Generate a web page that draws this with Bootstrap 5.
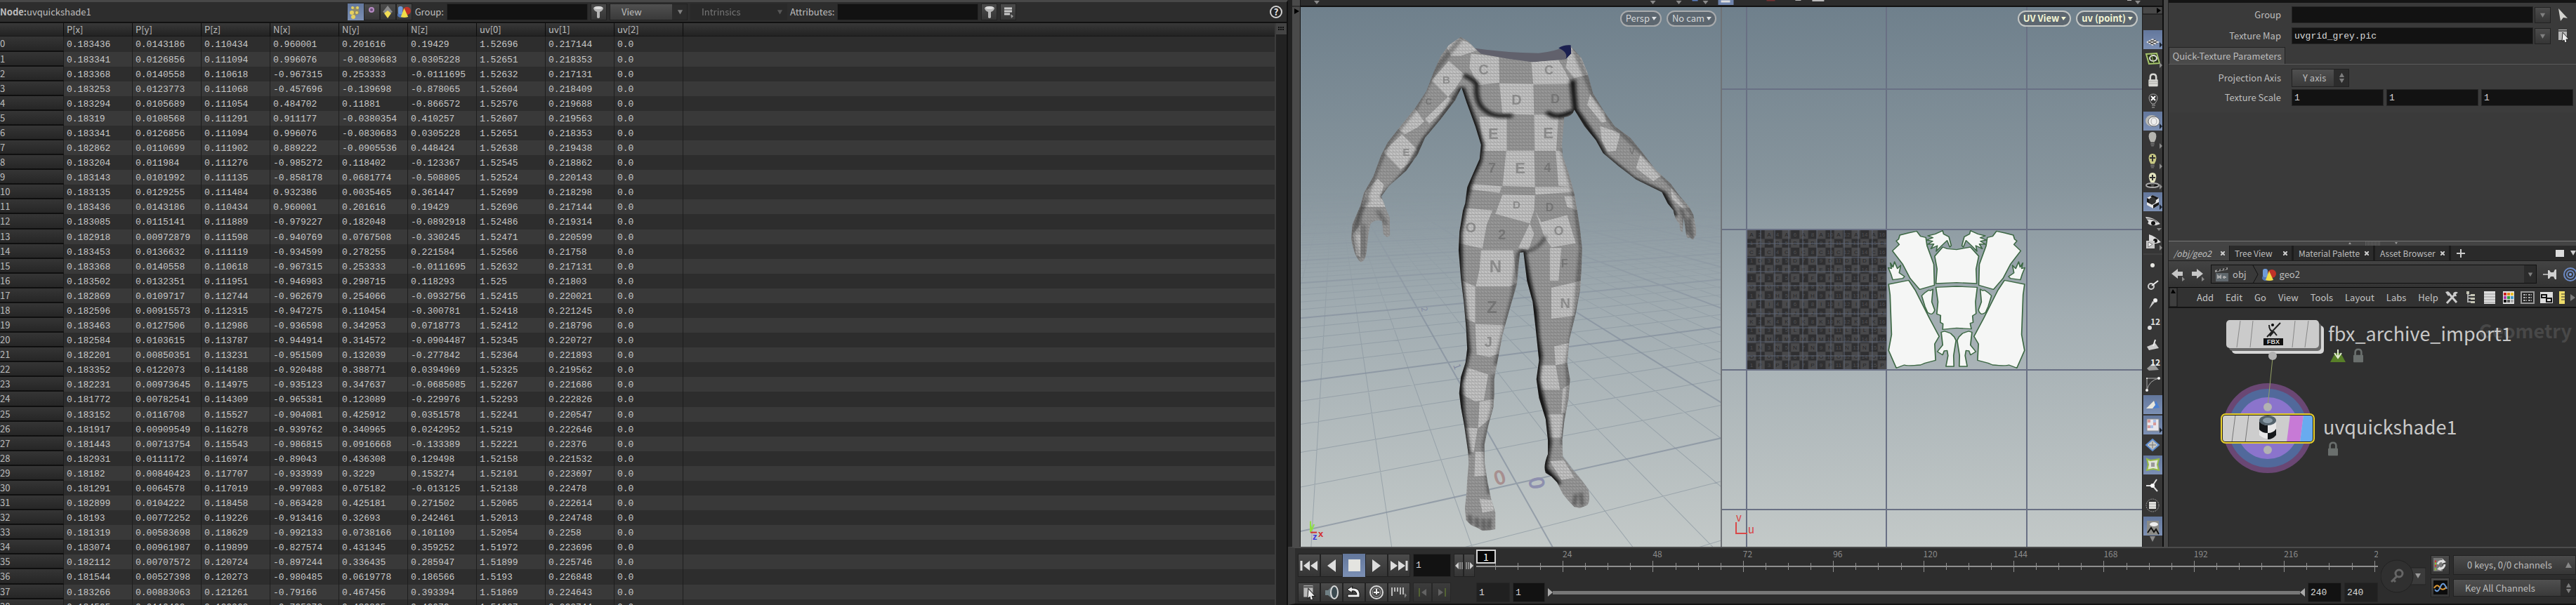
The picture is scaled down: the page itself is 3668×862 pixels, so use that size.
<!DOCTYPE html>
<html lang="en">
<head>
<meta charset="utf-8">
<meta name="viewport" content="width=device-width, initial-scale=1">
<title>uvquickshade1</title>
<link href="https://cdn.jsdelivr.net/npm/bootstrap@5.3.0/dist/css/bootstrap.min.css" rel="stylesheet">
<style>
:root{--ui:"Noto Sans CJK SC","Noto Sans",sans-serif;--code:"Liberation Mono",monospace}
body{background:#2d2d2d;color:#bdbdbd;font-family:var(--ui);font-size:13px;line-height:20px}
button,input,select{font-family:inherit;font-size:13px;color:inherit;border:0;border-radius:0;padding:0}
button{background:none;display:inline-flex;align-items:center;justify-content:center;white-space:nowrap}
svg{display:block;flex:none}
.field{background:#121212;border:1px solid #262626;color:#d8d8d8;font-family:var(--code);line-height:18px;height:24px;min-width:0;padding:0 3px}
.keycap{background:linear-gradient(#4b4b4b,#353535);border:1px solid #222}
.lit{background:linear-gradient(#63779c,#7c90b4)}
.picker{appearance:none;background:linear-gradient(90deg,transparent calc(100% - 21px),#2c2c2c calc(100% - 21px)),linear-gradient(#505050,#3a3a3a);border:1px solid #222}
.arrowed{position:relative}
.arrowed>svg{position:absolute;right:6px;top:50%;translate:0 -50%;pointer-events:none}

/* spreadsheet */
.sheet-pane{flex:0 0 50%;border-top:3px solid #484848;border-right:2px solid #111}
.sheet-bar{height:30px;border-bottom:2px solid #111}
.sheet-bar .keycap,.sheet-bar .lit{width:23px;height:24px}
.sheet-bar .field{width:201px}
.grid-data{width:100%;table-layout:fixed;border-collapse:separate;border-spacing:0}
.grid-data th,.grid-data td{padding:0 0 0 4px;border-right:1px solid #1e1e1e;white-space:nowrap;overflow:hidden}
.grid-data thead th{height:19px;line-height:18px;font-weight:400;background:linear-gradient(#383838,#222);border-right:1px solid #0c0c0c;border-bottom:1px solid #181818}
.grid-data tbody tr{height:21px;background:#2d2d2d}
.grid-data tbody tr:nth-child(even){background:#393939}
.grid-data tbody tr:nth-child(12n+1){height:22px}
.grid-data td{font-family:var(--code);line-height:18px;color:#c8c8c8}
.grid-data tbody td{padding-top:3px}
.grid-data td:last-child,.grid-data thead th:last-child{border-right:0}
.grid-data tbody th{font-weight:400;line-height:19px;padding-left:0;background:linear-gradient(#353535,#262626);border-bottom:2px solid #0f0f0f}
.scroller{width:17px;background:#222;border-left:2px solid #3c3c3c}

/* viewport */
.edge-strip{width:18px;background:#222;border-right:2px solid #161616}
.edge-strip div{width:11px;margin-left:6px;background:#4a4a4a;height:100%}
.scene{flex:1 1 0;background:linear-gradient(#6f808c,#87959d 33%,#a2adb2 57%,#c3c9c8);position:relative;min-width:0;overflow:hidden}
.scene+.scene{border-left:2px solid #6f7276}
.scene>svg{position:absolute;inset:0;width:100%;height:100%}
.pills{position:absolute;top:5px;right:6px;gap:7px}
.pill{height:23px;border:2px solid #a9abad;border-radius:12px;background:#5d6770;color:#d5d8da;padding:0 5px 1px 6px;gap:3px}
.pill.strong{border-color:#c3c6c4;font-weight:700;color:#f4f6d4}
.rail{width:29px;background:#363636;border-left:1px solid #222}
.rail button{width:27px;height:27px;margin-left:1px}
.rail-split{width:9px;background:#484848;border-left:2px solid #0e0e0e;border-right:1px solid #222}

/* right column */
.side{flex:0 0 580px;min-width:0}
.params{height:343px;background:#3a3a3a;border-top:4px solid #141414}
.params label{width:160px;text-align:right;margin-right:15px;flex:none}
.group-tab{background:#4a4a4a;border:1px solid #232323;border-bottom:0;width:166px;height:24px}
.h-split{height:7px;background:#444;border-top:1px solid #777}
.tabs-row{height:22px;background:#2a2a2a;border-bottom:1px solid #1d1d1d}
.doc-tab{height:21px;background:#2b2b2b;border-right:3px solid #1c1c1c;padding:0 6px 0 7px;line-height:20px;font-size:12px;justify-content:space-between}
.doc-tab.on{background:#434343;font-style:italic;border-right-width:1px}
.path-row{height:38px;background:linear-gradient(#434343,#333);border-bottom:1px solid #0c0c0c}
.path-box{height:27px;border:1px solid #111;background:#393939;flex:1 1 0}
.menu-row{height:29px;background:#323232;border-bottom:2px solid #141414}
.menu-row a{color:#c2c2c2;text-decoration:none}
.net{flex:1 1 0;min-height:0;background:#303030}
.net svg{width:100%;height:100%}

/* play bar */
.playbar{height:83px;border-top:2px solid #4b4b4b;background:#2d2d2d;border-bottom:2px solid #121212;border-left:10px solid #3a3a3a}
.transport .keycap,.transport .lit{width:32px;height:33px}
.transport.low .keycap{height:28px}
.ruler{position:relative;height:46px;overflow:hidden}
.ruler .base{position:absolute;left:0;right:0;top:25px;height:2px;background:#8f8f8f}
.tick{position:absolute;width:1px;height:10px;top:21px;background:#8f8f8f}
.tick.major{height:16px;top:18px}
.tick span{position:absolute;left:0;top:-17px;font-size:12px;line-height:14px;color:#8a8a8a}
.head{position:absolute;left:0;top:2px;width:28px;height:20px;border:2px solid #d5d5d5;background:#080808;color:#fff;text-align:center;line-height:16px;font-size:14px}
.track{height:5px;background:#777}
</style>
</head>
<body class="vh-100 d-flex overflow-hidden m-0">

<svg width="0" height="0" class="position-absolute" aria-hidden="true">
<defs>
<symbol id="down" viewBox="0 0 10 10"><path d="M1 2H9L5 9Z" fill="#808080"/></symbol>
<symbol id="updown" viewBox="0 0 10 18"><path d="M1 8H9L5 1ZM1 10H9L5 17Z" fill="#7d7d7d"/></symbol>
<symbol id="funnel" viewBox="0 0 20 20"><path d="M3 4Q10 0 17 4Q17 8 12 10V18Q10 20 8 18V10Q3 8 3 4Z" fill="#b5b5b5"/><ellipse cx="10" cy="4" rx="6" ry="2" fill="#dcdcdc"/></symbol>
<symbol id="prims" viewBox="0 0 20 20"><ellipse cx="5" cy="15" rx="5" ry="4" fill="#5377b5"/><rect x="1" y="2" width="7" height="12" rx="3" fill="#6f9bd8"/><circle cx="14" cy="9" r="6" fill="#c03228"/><path d="M10 5L16 18Q10 20 5 18Z" fill="#f0dd49"/></symbol>
<symbol id="padlock" viewBox="0 0 20 24"><path d="M5 12V7Q5 2 10 2T15 7V12" fill="none" stroke="currentColor" stroke-width="3"/><rect x="2" y="11" width="16" height="12" rx="1" fill="currentColor"/></symbol>
<symbol id="bulb" viewBox="0 0 20 24"><path d="M10 1Q16 1 16 8Q16 12 13 17H7Q4 12 4 8Q4 1 10 1Z" fill="currentColor"/><path d="M7 19H13M7 21H13M8 23H12" stroke="#8a8a8a"/></symbol>
<symbol id="pageptr" viewBox="0 0 20 20"><path d="M3 1H15V16H3Z" fill="#b8b8b8"/><path d="M3 3H15" stroke="#555" stroke-width="2"/><path d="M9 5L18 15L14 15L15 19L12 20L11 16L8 18Z" fill="#ececec" stroke="#222"/></symbol>
</defs>
</svg>

<section class="sheet-pane d-flex flex-column overflow-hidden">
  <div class="sheet-bar d-flex align-items-center">
    <div class="flex-grow-1 d-flex" style="flex-basis:0"><b class="fw-semibold">Node:</b><span>uvquickshade1</span></div>
    <div class="d-flex align-items-center" style="flex:0 0 73%">
      <button class="lit" aria-label="Points"><svg width="20" height="20" viewBox="0 0 20 20"><path d="M5 4L14 2L16 12L8 17Z" fill="#8f8a6a"/><g fill="#e6d05e"><circle cx="6" cy="4" r="2"/><circle cx="13" cy="4" r="2"/><circle cx="5" cy="11" r="3"/><circle cx="12" cy="11" r="2"/><circle cx="7" cy="17" r="3"/></g></svg></button>
      <button class="keycap" aria-label="Vertices"><svg width="18" height="20" viewBox="0 0 18 20"><circle cx="9" cy="7" r="3" fill="#6b4c7a" stroke="#b78cc4" stroke-width="2"/></svg></button>
      <button class="keycap" aria-label="Primitives"><svg width="20" height="20" viewBox="0 0 20 20"><path d="M10 1L17 10L10 14L3 10Z" fill="#8c8c8c"/><path d="M10 8L15 12L10 19L5 12Z" fill="#f1dd55"/></svg></button>
      <button class="keycap" aria-label="Detail"><svg width="19" height="19"><use href="#prims"/></svg></button>
      <label for="grp" class="mx-1">Group:</label><input id="grp" class="field me-1">
      <button class="keycap me-1" aria-label="Filter group"><svg width="20" height="20"><use href="#funnel"/></svg></button>
      <div class="arrowed me-1"><select class="picker ps-3" aria-label="View" style="width:111px;height:24px"><option>View</option></select><svg width="9" height="9"><use href="#down"/></svg></div>
      <div class="arrowed opacity-50"><select class="ps-3 picker border-0" aria-label="Intrinsics" disabled style="width:138px;height:24px;background:#272727;opacity:1"><option>Intrinsics</option></select><svg width="9" height="9"><use href="#down"/></svg></div>
      <label for="att" class="mx-1">Attributes:</label><input id="att" class="field me-1">
      <button class="keycap me-1" aria-label="Filter attributes"><svg width="20" height="20"><use href="#funnel"/></svg></button>
      <button class="keycap" aria-label="Columns"><svg width="18" height="20" viewBox="0 0 18 20"><path d="M3 5H14M3 9H14M3 13H11" stroke="#c9c9c9" stroke-width="3"/><path d="M12 13L16 16L13 19Z" fill="#999"/></svg></button>
      <button class="ms-auto me-1 bg-transparent" aria-label="Help"><svg width="22" height="20" viewBox="0 0 22 20"><circle cx="11" cy="10" r="8" fill="#242424" stroke="#d2d2d2" stroke-width="2"/><text x="11" y="15" text-anchor="middle" font-size="13" font-weight="700" fill="#e6e6e6">?</text></svg></button>
    </div>
  </div>
  <div class="d-flex flex-grow-1 overflow-hidden">
    <div class="flex-grow-1 overflow-hidden">
      <table class="grid-data">
        <colgroup><col style="width:91px"><col span="9" style="width:98px"><col></colgroup>
        <thead><tr><th></th><th>P[x]</th><th>P[y]</th><th>P[z]</th><th>N[x]</th><th>N[y]</th><th>N[z]</th><th>uv[0]</th><th>uv[1]</th><th>uv[2]</th><th></th></tr></thead>
        <tbody id="rows"></tbody>
      </table>
    </div>
    <div class="scroller"><svg width="15" height="16" viewBox="0 0 15 16"><rect width="15" height="16" fill="#444"/><path d="M3 6H12M3 9H12" stroke="#111" stroke-width="2" stroke-dasharray="2 1"/></svg></div>
  </div>
</section>

<main class="flex-grow-1 d-flex flex-column" style="min-width:0">
  <div class="d-flex flex-grow-1" style="min-height:0">
    <div class="edge-strip"><div><svg width="11" height="22" viewBox="0 0 11 22"><path d="M0 9H11" stroke="#161616"/><path d="M3 12L10 16L3 20Z" fill="#000"/></svg></div></div>
    <div class="d-flex flex-column flex-grow-1" style="min-width:0">
      <svg class="w-100" height="10" viewBox="0 0 1228 10" preserveAspectRatio="none"><rect width="1228" height="10" fill="#2c2c2c"/><path d="M0 9H1228" stroke="#111" stroke-width="2"/><path d="M19 1H27L23 6ZM498 1H506L502 6ZM535 1H543L539 6ZM573 1H581L577 6ZM1189 1H1197L1193 6Z" fill="#8a8a8a"/><rect x="595" width="22" height="7" fill="#7085ad"/><path d="M599 2H612" stroke="#ddd" stroke-width="3"/><path d="M558 0H566" stroke="#5b7fc0" stroke-width="3"/><path d="M664 0H676" stroke="#733" stroke-width="3"/><path d="M705 0H713M729 1H746M1178 0H1184" stroke="#bbb" stroke-width="2"/></svg>
      <div class="d-flex flex-grow-1" style="min-height:0">
        <div class="scene">
          <svg viewBox="1853 10 597 769" preserveAspectRatio="xMidYMid slice">
            <defs>
              <linearGradient id="fade" gradientUnits="userSpaceOnUse" x1="0" y1="275" x2="0" y2="460"><stop offset="0" stop-color="#000"/><stop offset=".4" stop-color="#555"/><stop offset="1" stop-color="#eee"/></linearGradient>
              <mask id="far" maskUnits="userSpaceOnUse" x="1840" y="270" width="640" height="520"><rect x="1840" y="270" width="640" height="520" fill="url(#fade)"/></mask>
              <pattern id="mesh" width="11" height="14" patternUnits="userSpaceOnUse"><path d="M0 0L11 14M0 0V14M0 7H11" stroke="#2c2c2c" stroke-width="1" opacity=".42" fill="none"/></pattern>
              <filter id="soft" x="-20%" y="-20%" width="140%" height="140%"><feGaussianBlur stdDeviation="6"/></filter>
              <clipPath id="skin"><path id="figure" d="M589 160L615 178L640 210L660 232L750 252L840 267L955 255L975 230L973 200L1010 250L1030 310L1050 400L1090 480L1125 540L1180 590L1220 650L1270 730L1320 785L1350 835L1385 885L1400 920L1408 970Q1412 1010 1404 1012L1400 1024L1392 1022L1388 1014Q1378 1026 1374 1000L1366 930L1362 992Q1352 994 1352 960L1346 950Q1336 940 1330 900L1310 870L1290 822L1200 768L1140 712L1085 655L1060 600L1020 540L985 470Q978 500 950 502L942 620L945 670L965 740L985 830L995 900L1005 980L1012 1060L1010 1150L1005 1240L990 1340L968 1450L960 1550L970 1620L965 1700L950 1800L943 1880L945 1950L975 2000L1010 2050L1034 2090Q1042 2140 1030 2158L1005 2170L985 2165L965 2140L945 2110L925 2060L905 2035L885 2020Q876 1990 893 1940L893 1880L885 1790L862 1700L853 1620L862 1540L850 1400L840 1290L820 1200L808 1078L795 1080L790 1150L785 1215L760 1320L735 1430L718 1540L706 1620L706 1690L703 1740L685 1820L672 1900L673 1980L683 2060L695 2130L710 2190L710 2260L690 2265L665 2267L650 2256L625 2242L608 2222L604 2170L610 2100L612 2050L617 1980L615 1930L602 1820L590 1740L584 1680L590 1610L606 1550L612 1490L608 1400L600 1290L590 1190L582 1070L585 990L597 900L605 870L612 800L630 750L655 680L660 620L640 540L610 440L592 375L570 430L520 510L465 590L440 660L400 730L340 795L313 840L328 890L342 930L343 1005Q334 1024 320 1000L315 945Q290 936 275 958L268 1000L262 1070Q258 1120 240 1120Q218 1095 208 1020L212 960L240 880L252 825L285 755L312 665L335 610L380 540L430 465L470 390L495 310L520 240L548 195Z"/></clipPath>
            </defs>
            <g id="floor" mask="url(#far)" fill="none"></g>
            <text x="2180" y="703" font-size="30" font-weight="700" fill="#8d8fae" text-anchor="middle" transform="rotate(80 2187 695)">0</text>
            <text x="2136" y="690" font-size="28" font-weight="700" fill="#a78f8f" text-anchor="middle" transform="rotate(-18 2136 680)">0</text>
            <text x="2025" y="447" font-size="12" fill="#8289a0" transform="rotate(80 2030 442)">2</text>
            <text x="2071" y="528" font-size="14" fill="#8289a0" transform="rotate(70 2076 523)">1</text>
            <g transform="translate(1840 0) scale(.40816 .33333)">
              <path d="M638 208Q740 226 860 229Q920 222 970 193L975 230L955 256L840 268L750 254L660 234Z" fill="#61616c"/>
              <path d="M930 207Q950 192 973 195L974 230L955 255Q965 225 930 207Z" fill="#1b2050"/>
              <g clip-path="url(#skin)">
                <rect x="190" y="150" width="1240" height="2140" fill="#989898"/>
                <g fill="#c3c3c3">
                  <path d="M625 230L722 245L724 355L650 365L620 290ZM835 265L930 258L950 300L975 360L842 362ZM724 358L842 360L845 492L735 488ZM655 500L750 500L750 645L665 645ZM845 492L930 492L922 645L847 645ZM748 645L845 645L848 800L735 795ZM920 645L942 648L985 800L930 795ZM610 785L732 797L725 825L608 808ZM848 800L985 800L988 820L850 832ZM735 832L848 835L845 900L830 955L710 915ZM590 888L700 900L680 960L665 1062L580 1040ZM950 840L990 840L998 900L960 885ZM850 905L870 950L960 920L990 1040L905 1058L880 1010ZM830 955L845 1000L825 1070L790 1060Z"/>
                  <path d="M660 1070L772 1070L785 1210L760 1225L642 1225L655 1150ZM640 1385L748 1390L725 1510L690 1525L645 1515ZM610 1570L685 1600L670 1710L640 1715L586 1680ZM655 1715L710 1705L690 1790L650 1830ZM600 1825L648 1830L635 1930L612 1930ZM640 1930L678 1930L682 2030L637 2035ZM655 2130L698 2135L705 2180L665 2190ZM905 1230L1010 1200L985 1350L905 1362ZM900 1060L940 1060L930 1200L900 1200ZM915 1480L970 1465L960 1550L920 1560ZM865 1560L920 1560L935 1665L868 1665ZM945 1660L972 1640L960 1760L940 1765ZM885 1770L948 1770L940 1870L892 1870ZM900 1970L948 1965L985 2040L940 2050ZM595 1200L640 1225L640 1380L605 1360Z"/>
                  <path d="M575 160L625 190L650 215L590 240L555 240L540 200ZM548 262L602 320L570 380L545 415L488 345ZM430 465L462 520L440 545L395 575L370 550ZM545 415L565 430L480 530L465 510ZM385 575L438 640L430 680L380 725L320 650ZM300 765L322 790L310 840L330 885L245 885L258 820ZM240 960L215 1000L225 1090L240 1100ZM970 200L1010 250L1035 320L985 335L955 290ZM1040 405L1090 480L1095 522L1080 525L1030 450ZM1075 540L1145 570L1130 645L1100 650L1080 600ZM1215 660L1290 750L1260 775L1200 720ZM1320 800L1390 890L1360 890L1325 850Z"/>
                </g>
                <rect x="190" y="150" width="1240" height="2140" fill="url(#mesh)"/>
                <g fill="none" stroke="#111" filter="url(#soft)">
                  <path d="M592 375L610 440L640 540L660 620L652 690L625 760L605 850L583 1000L586 1180L605 1400L612 1500L586 1640L592 1760L612 1940" stroke-width="20"/>
                  <path d="M600 322Q632 340 645 360Q640 440 672 470Q700 505 770 495" stroke-width="15"/>
                  <path d="M890 480Q920 515 980 478M978 345L988 470L1060 600L1090 668L1190 768L1295 828L1335 925" stroke-width="18"/>
                  <path d="M804 1070L822 1200L846 1330L852 1440L862 1520L852 1620L885 1790L894 1890L880 2000L930 2070" stroke-width="22"/>
                  <path d="M592 375L520 512L465 592L400 732L315 845" stroke-width="10"/>
                  <path d="M804 1078Q860 1070 885 1010M790 1080L772 1260L712 1560" stroke-width="9" opacity=".6"/>
                  <path d="M590 165L495 310L430 465L335 610L285 755L210 1000M985 210L1050 400L1125 540L1220 650L1320 785L1405 930M985 340L985 470M945 640L985 830L1010 1060L990 1340L962 1550L968 1650L945 1900M706 1600L704 1740L672 1900L690 2110" stroke-width="12" opacity=".5"/>
                  <path d="M230 1000L240 900L270 850M300 900L330 960M215 1000L230 1110M250 960L250 1100" stroke-width="12" opacity=".35"/>
                  <path d="M620 2200L625 2240M645 2210L648 2255M668 2215L670 2265M690 2215L688 2262M990 2110L985 2160M1008 2105L1012 2160M1355 890L1365 920L1378 1000M1385 930L1395 1020" stroke-width="6" opacity=".8"/>
                </g>
              </g>
            </g>
            <g id="marks" fill="#555" opacity=".45" font-family="Liberation Sans, sans-serif" font-weight="700" text-anchor="middle"></g>
            <g fill="none" stroke-width="2"><path d="M1867 758V742" stroke="#90e040"/><path d="M1867 758H1876" stroke="#d03030"/></g>
            <g font-size="13" font-weight="700" font-family="Liberation Sans, sans-serif"><text x="1866" y="753" fill="#8ee03c">y</text><text x="1878" y="764" fill="#d22d2d">x</text><text x="1870" y="768" fill="#3a34dd">z</text></g>
          </svg>
          <div class="pills d-flex">
            <button class="pill">Persp<svg width="7" height="5"><path d="M0 0H7L3 5Z" fill="#dfe2e4"/></svg></button>
            <button class="pill">No cam<svg width="7" height="5"><path d="M0 0H7L3 5Z" fill="#dfe2e4"/></svg></button>
          </div>
        </div>
        <div class="scene">
          <svg viewBox="2452 10 598 769" preserveAspectRatio="xMidYMid slice">
            <defs>
              <pattern id="chk" x="2488" y="328" width="24.75" height="24.75" patternUnits="userSpaceOnUse"><rect width="24.75" height="24.75" fill="#2f2f31"/><path d="M0 0H12.4V12.4H0ZM12.4 12.4H24.75V24.75H12.4Z" fill="#49494b"/></pattern>
              <g id="half">
                <path d="M687 988L658 996L630 1005L626 1022L618 1030L628 1045L605 1072L640 1130L665 1190L697 1237L747 1219L745 1130L722 1050L718 1015L700 1010Z"/>
                <path d="M775 986L750 1000L725 1008L742 1016L721 1026L741 1031L724 1044L745 1043L735 1063L757 1050L753 1074L770 1052L790 1028L799 1056L804 1050L796 1012L778 1000Z"/>
                <path d="M612 1119L607 1142L598 1124L602 1148L591 1144L600 1172L606 1196L640 1190L646 1182L628 1166L633 1134L622 1148Z"/>
                <path d="M592 1215L660 1198L682 1240L730 1360L763 1438L748 1470L751 1540L715 1552L700 1560Q655 1565 645 1560L618 1573L592 1498L602 1430L597 1260Z"/>
                <path d="M742 1236L734 1242L728 1240L716 1250L704 1264L715 1310L724 1336Q742 1352 748 1325L738 1290Z"/>
                <path d="M770 1420L781 1416L792 1420L802 1425L814 1440L820 1455L812 1520L813 1566L786 1566L793 1520L790 1498L780 1500L775 1517L757 1503L775 1475Z"/>
              </g>
            </defs>
            <path d="M2487 0V790M2686 0V790M2886 0V790M2440 127H3060M2440 327H3060M2440 527H3060M2440 726H3060" stroke="#697084" stroke-width="2"/>
            <rect x="2488" y="328" width="198" height="198" fill="url(#chk)"/>
            <g id="cells" font-family="Liberation Sans, sans-serif" font-size="8" text-anchor="middle"></g>
            <path stroke="#5d6574" stroke-width="1" fill="none" d="M2507 328V526M2527 328V526M2547 328V526M2567 328V526M2587 328V526M2607 328V526M2626 328V526M2646 328V526M2666 328V526M2488 347H2686M2488 367H2686M2488 387H2686M2488 407H2686M2488 427H2686M2488 447H2686M2488 467H2686M2488 487H2686M2488 507H2686"/>
            <g transform="translate(2440 0) scale(.42092 .33333)" fill="#f5f6f5" stroke="#3d6844" stroke-width="4" stroke-linejoin="round">
              <use href="#half"/><use href="#half" transform="translate(1644 0) scale(-1 1)"/>
              <path d="M775 1056L790 1063L822 1067L869 1056L897 1095L888 1150L890 1212L822 1208L752 1212L756 1150L748 1095Z"/>
              <path d="M752 1228L822 1224L892 1228L886 1290L888 1340L876 1350L878 1378L868 1382L872 1406L822 1402L775 1408L776 1384L767 1378L768 1348L755 1342L759 1290Z"/>
            </g>
            <path d="M2472 744V760H2488" fill="none" stroke="#d94848" stroke-width="2"/>
            <g font-size="15" fill="#d94040"><text x="2472" y="743">v</text><text x="2489" y="760">u</text></g>
          </svg>
          <div class="pills d-flex">
            <button class="pill strong">UV View<svg width="7" height="5"><path d="M0 0H7L3 5Z" fill="#f4f6d4"/></svg></button>
            <button class="pill strong">uv (point)<svg width="7" height="5"><path d="M0 0H7L3 5Z" fill="#f4f6d4"/></svg></button>
          </div>
        </div>
        <div class="rail d-flex flex-column">
          <svg width="28" height="21" viewBox="0 0 28 21"><path d="M1 0H27V10H1Z" fill="#484848"/><path d="M20 1L26 5L20 9Z" fill="#000"/><path d="M0 10H28" stroke="#111"/></svg>
          <div id="tools" class="d-flex flex-column justify-content-between flex-grow-1 pt-2 mt-1"></div>
          <svg width="28" height="16" viewBox="0 0 28 16"><path d="M10 1H18L14 9Z" fill="#8a8a8a"/></svg>
        </div>
      </div>
    </div>
    <div class="rail-split"></div>
    <aside class="side d-flex flex-column">
      <form class="params d-flex flex-column">
        <div class="d-flex align-items-center pe-2" style="margin-top:5px"><label for="pg">Group</label><input id="pg" class="field flex-grow-1"><button type="button" class="keycap" aria-label="Group menu" style="width:23px;height:23px;margin-left:2px"><svg width="9" height="9"><use href="#down"/></svg></button><svg class="ms-2" width="20" height="20" viewBox="0 0 20 20"><path d="M3 1L16 15L10 14L6 19Z" fill="#d4d4d0"/></svg></div>
        <div class="d-flex align-items-center pe-2" style="margin-top:6px"><label for="tm">Texture Map</label><input id="tm" class="field flex-grow-1" value="uvgrid_grey.pic"><button type="button" class="keycap" aria-label="Texture menu" style="width:23px;height:23px;margin-left:2px"><svg width="9" height="9"><use href="#down"/></svg></button><svg class="ms-2" width="20" height="20"><use href="#pageptr"/></svg></div>
        <div class="mt-1" style="border-bottom:1px solid #5a5a5a"><button type="button" class="group-tab">Quick-Texture Parameters</button></div>
        <div style="background:#3c3c3c;height:68px">
        <div class="d-flex align-items-center pt-1" style="margin-top:2px"><label for="ax">Projection Axis</label><div class="arrowed"><select id="ax" class="picker" style="width:82px;height:26px;padding-left:15px"><option>Y axis</option></select><svg width="9" height="17"><use href="#updown"/></svg></div></div>
        <div class="d-flex align-items-center pe-1" style="margin-top:3px"><label for="sx">Texture Scale</label><div class="d-flex flex-grow-1 gap-1" style="min-width:0"><input id="sx" class="field w-100" value="1"><input class="field w-100" aria-label="Scale y" value="1"><input class="field w-100" aria-label="Scale z" value="1"></div></div>
        </div>
      </form>
      <div class="h-split d-flex justify-content-center"><svg width="72" height="6" viewBox="0 0 72 6"><path d="M2 4L4 1L6 4ZM68 1H72L70 4Z" fill="#999"/><path d="M26 1H48M26 3H48M26 5H48" stroke="#777" stroke-dasharray="1 1"/></svg></div>
      <div class="tabs-row d-flex align-items-center">
        <button class="doc-tab on" style="width:87px">/obj/geo2<svg width="6" height="6"><path d="M0 0L6 6M6 0L0 6" stroke="#ccc" stroke-width="2"/></svg></button>
        <button class="doc-tab" style="width:91px">Tree View<svg width="6" height="6"><path d="M0 0L6 6M6 0L0 6" stroke="#ccc" stroke-width="2"/></svg></button>
        <button class="doc-tab" style="width:116px">Material Palette<svg width="6" height="6"><path d="M0 0L6 6M6 0L0 6" stroke="#ccc" stroke-width="2"/></svg></button>
        <button class="doc-tab" style="width:108px">Asset Browser<svg width="6" height="6"><path d="M0 0L6 6M6 0L0 6" stroke="#ccc" stroke-width="2"/></svg></button>
        <button class="ms-2" aria-label="New tab"><svg width="12" height="12"><path d="M6 0V12M0 6H12" stroke="#ccc" stroke-width="2"/></svg></button>
        <svg class="ms-auto me-2" width="12" height="10"><rect width="12" height="10" fill="#dcdcdc"/></svg><svg width="9" height="9"><path d="M1 1H9L5 8Z" fill="#ccc"/></svg>
      </div>
      <div class="path-row d-flex align-items-center ps-1 gap-2">
        <button aria-label="Back"><svg width="20" height="22" viewBox="0 0 20 22"><path d="M0 10L9 3V7H16V13H9V17Z" fill="#c6c6c6"/><path d="M15 14L19 18L15 21Z" fill="#888"/></svg></button>
        <button aria-label="Forward"><svg width="20" height="22" viewBox="0 0 20 22"><path d="M17 10L8 3V7H1V13H8V17Z" fill="#c6c6c6"/><path d="M15 14L19 18L15 21Z" fill="#888"/></svg></button>
        <div class="path-box d-flex align-items-center">
          <svg class="mx-1" width="22" height="22" viewBox="0 0 22 22"><path d="M1 5L19 1V4L1 8Z" fill="#999"/><path d="M2 9H20V21H2Z" fill="#5f676c"/><path d="M4 6L7 4M9 5L12 3M14 4L17 2" stroke="#222" stroke-width="2"/><path d="M5 17V13L7 15L9 13V17M12 15H17M14 13V17" stroke="#aaa" fill="none" stroke-width="2"/></svg><span>obj</span>
          <svg class="ms-2" width="9" height="26" viewBox="0 0 9 26"><path d="M1 0L8 13L1 26" fill="none" stroke="#111"/></svg>
          <svg class="mx-1" width="22" height="20"><use href="#prims"/></svg><span>geo2</span>
          <span class="ms-auto d-flex align-items-center justify-content-center h-100" style="width:17px;background:#2b2b2b"><svg width="8" height="8"><use href="#down"/></svg></span>
        </div>
        <svg width="22" height="18" viewBox="0 0 22 18"><path d="M1 9H8" stroke="#aaa" stroke-width="2"/><path d="M8 3H10L12 6H16L18 2H20V16H18L16 12H12L10 15H8Z" fill="#d0d0d0"/></svg>
        <svg width="18" height="22" viewBox="0 0 18 22"><g fill="none" stroke="#6b8ac6" stroke-width="2"><circle cx="10" cy="11" r="9"/><circle cx="10" cy="11" r="5"/></g><circle cx="10" cy="11" r="2" fill="#7da0e0"/></svg>
      </div>
      <nav class="menu-row d-flex align-items-center">
        <svg width="13" height="27" viewBox="0 0 13 27"><rect x="1" width="11" height="27" fill="#3f3f3f" stroke="#111"/><path d="M3 8H10L6 2Z" fill="#000"/></svg>
        <div class="d-flex" style="gap:17px;margin-left:27px"><a href="#">Add</a><a href="#">Edit</a><a href="#">Go</a><a href="#">View</a><a href="#">Tools</a><a href="#">Layout</a><a href="#">Labs</a><a href="#">Help</a></div>
        <div class="d-flex ms-auto" style="gap:7px">
          <svg width="20" height="20" viewBox="0 0 20 20"><path d="M3 18L14 6M5 3L17 17" stroke="#ccc" stroke-width="3"/><path d="M12 4Q15 0 19 3L16 5L17 8Q13 9 12 4ZM1 2L5 1L8 5L5 8Z" fill="#ccc"/></svg>
          <svg width="20" height="20" viewBox="0 0 20 20"><path d="M6 2V16H11M6 7H11M6 11H11" stroke="#aaa" fill="none" stroke-width="2"/><path d="M4 1H8V5H4ZM10 5H16V8H10ZM10 10H16V13H10ZM10 15H16V18H10Z" fill="#c5c5b5"/></svg>
          <svg width="20" height="20" viewBox="0 0 20 20"><path d="M2 1H18V19H2Z" fill="#ddd"/><path d="M2 5H18M2 9H18M2 13H18M2 17H18" stroke="#999"/></svg>
          <svg width="20" height="20" viewBox="0 0 20 20"><path d="M2 1H18V19H2Z" fill="#e6e6e6"/><g fill="#c22"><rect x="3" y="3" width="4" height="4"/><rect x="8" y="8" width="4" height="4" fill="#2a9d3a"/><rect x="13" y="3" width="4" height="4" fill="#eebf2a"/><rect x="8" y="3" width="4" height="4" fill="#e88322"/><rect x="3" y="8" width="4" height="4" fill="#a3a"/><rect x="13" y="8" width="4" height="4" fill="#49c"/><rect x="3" y="13" width="4" height="4" fill="#111"/><rect x="8" y="13" width="4" height="4" fill="#555"/><rect x="13" y="13" width="4" height="4" fill="#aaa"/></g></svg>
          <svg width="20" height="20" viewBox="0 0 20 20"><path d="M1 2H19V18H1Z" fill="#262626" stroke="#999" stroke-width="2"/><path d="M4 6H9M11 6H16M4 10H9M11 10H16M4 14H9M11 14H16" stroke="#aaa" stroke-width="2" stroke-dasharray="3 1"/></svg>
          <svg width="20" height="20" viewBox="0 0 20 20"><path d="M1 2H19V18H1Z" fill="#ddd"/><path d="M3 6H10V10H3ZM10 11H17V16H10Z" fill="#ddd" stroke="#111" stroke-width="2"/></svg>
          <svg width="9" height="20" viewBox="0 0 9 20"><path d="M1 1H9V19H1Z" fill="#eedc6a"/><path d="M4 5H9M4 9H9M4 13H9" stroke="#333"/></svg>
          <svg width="9" height="20" viewBox="0 0 9 20"><path d="M1 5L8 10L1 15Z" fill="#777"/></svg>
        </div>
      </nav>
      <div class="net">
        <svg viewBox="3088 439 580 340" preserveAspectRatio="xMinYMin slice">
          <text x="3662" y="482" text-anchor="end" font-size="27" font-weight="700" fill="#484848">Geometry</text>
          <rect x="3178" y="464" width="131" height="40" rx="5" fill="#d6d6d6"/><rect x="3174" y="460" width="131" height="40" rx="5" fill="#6a6a6a"/>
          <rect x="3170" y="456" width="132" height="40" rx="5" fill="#cbcbcb"/>
          <path d="M3190 457L3185 495M3208 457L3204 495M3268 457L3264 495M3287 457L3282 495" stroke="#888"/>
          <path d="M3247 460L3228 480M3231 463Q3231 472 3238 473L3242 478M3238 472L3232 479" stroke="#222" stroke-width="2" fill="none"/><circle cx="3236" cy="463" r="2"/>
          <rect x="3223" y="482" width="28" height="10" fill="#111"/><text x="3237" y="490" font-size="9" font-weight="700" fill="#ddd" text-anchor="middle" font-family="Liberation Sans, sans-serif">FBX</text>
          <text x="3315" y="486" font-size="27" fill="#c9c9c9">fbx_archive_import1</text>
          <path d="M3318 516L3325 503H3333L3340 516Z" fill="#587f28"/><path d="M3329 498V508M3324 503L3329 510L3334 503" fill="none" stroke="#e3ecd2" stroke-width="2"/>
          <g color="#6a6f6d"><use href="#padlock" x="3349" y="496" width="18" height="21"/><use href="#padlock" x="3313" y="629" width="18" height="21"/></g>
          <circle cx="3229" cy="610" r="64" fill="#6a4774"/><circle cx="3229" cy="610" r="56" fill="#51699b"/><circle cx="3229" cy="610" r="44" fill="#8b74cc"/>
          <path d="M3236 510L3229 579" stroke="#93a064" stroke-width="1"/>
          <g fill="#b2b2b2"><circle cx="3236" cy="507" r="6"/><circle cx="3229" cy="580" r="6"/><circle cx="3229" cy="641" r="6"/></g>
          <rect x="3163" y="590" width="132" height="41" rx="6" fill="#cdcdcd"/>
          <path d="M3261 591H3280L3275 630H3256Z" fill="#c77ad6"/><path d="M3280 591H3289Q3294 591 3294 596V625Q3294 630 3289 630H3275Z" fill="#68abef"/>
          <path d="M3183 591L3178 630M3202 591L3197 630" stroke="#777"/>
          <rect x="3164" y="591" width="130" height="39" rx="5" fill="none" stroke="#2a2408" stroke-width="2"/><rect x="3163" y="590" width="132" height="41" rx="6" fill="none" stroke="#e8cf2f" stroke-width="2"/>
          <path d="M3217 598V620Q3229 630 3241 620V598Z" fill="#e8e8e8"/><path d="M3217 600Q3222 606 3229 606V617Q3221 617 3217 612ZM3229 617Q3237 617 3241 611V620Q3236 626 3229 626Z" fill="#15181a"/><ellipse cx="3229" cy="599" rx="12" ry="7" fill="#53626b"/><ellipse cx="3229" cy="599" rx="7" ry="4" fill="#8a9ba6"/>
          <text x="3308" y="619" font-size="27" fill="#c9c9c9">uvquickshade1</text>
        </svg>
      </div>
    </aside>
  </div>

  <footer class="playbar d-flex ps-1">
    <div class="d-flex flex-column" style="width:254px;padding-top:8px;gap:8px">
      <div class="transport d-flex">
        <button class="keycap" aria-label="First frame"><svg width="26" height="16"><path d="M2 1V15" stroke="#ddd" stroke-width="3"/><path d="M14 1V15L5 8ZM25 1V15L15 8Z" fill="#ddd"/></svg></button>
        <button class="keycap" aria-label="Play back"><svg width="16" height="20"><path d="M14 1V19L2 10Z" fill="#ddd"/></svg></button>
        <button class="lit" aria-label="Stop"><svg width="17" height="17"><rect width="17" height="17" fill="#e4e4e0"/></svg></button>
        <button class="keycap" aria-label="Play"><svg width="16" height="20"><path d="M2 1V19L14 10Z" fill="#ddd"/></svg></button>
        <button class="keycap" aria-label="Last frame"><svg width="26" height="16"><path d="M24 1V15" stroke="#ddd" stroke-width="3"/><path d="M1 1V15L11 8ZM12 1V15L22 8Z" fill="#ddd"/></svg></button>
        <input class="field ms-1" aria-label="Frame" value="1" style="width:54px;height:33px">
        <button class="keycap ms-1" aria-label="Previous key" style="width:14px"><svg width="11" height="10"><path d="M5 0V10L0 5Z" fill="#ccc"/><path d="M7 0V10M10 0V10" stroke="#ccc"/></svg></button>
        <button class="keycap" aria-label="Next key" style="width:16px"><svg width="11" height="10"><path d="M6 0V10L11 5Z" fill="#ccc"/><path d="M1 0V10M4 0V10" stroke="#ccc"/></svg></button>
      </div>
      <div class="transport low d-flex">
        <button class="keycap" aria-label="Options"><svg width="22" height="22"><use href="#pageptr"/></svg></button>
        <button class="keycap" aria-label="Audio"><svg width="22" height="22" viewBox="0 0 22 22"><path d="M2 8H6L12 2V20L6 15H2Z" fill="#6f7f84"/><ellipse cx="15" cy="11" rx="5" ry="9" fill="#3c4a50" stroke="#d8d8d8" stroke-width="2"/></svg></button>
        <button class="keycap" aria-label="Loop"><svg width="24" height="22" viewBox="0 0 24 22"><path d="M3 18H20V12Q18 4 9 5L10 2L2 7L10 12L9 9Q15 8 16 14H3Z" fill="#eee" stroke="#111"/></svg></button>
        <button class="keycap" aria-label="Real time"><svg width="22" height="22" viewBox="0 0 22 22"><circle cx="11" cy="11" r="9" fill="none" stroke="#d8d8d8" stroke-width="2"/><circle cx="11" cy="11" r="6" fill="#444" stroke="#aaa"/><path d="M11 6V14M7 11H15" stroke="#eee" stroke-width="2"/></svg></button>
        <button class="keycap" aria-label="Sub frames"><svg width="24" height="20" viewBox="0 0 24 20"><path d="M2 3V15M6 3V9M10 3V9M14 3V13M18 3V13" stroke="#bbb" stroke-width="2"/><path d="M20 11L23 14L20 18Z" fill="#888"/></svg></button>
        <button class="keycap ms-1 opacity-50" aria-label="Range start" style="width:27px"><svg width="12" height="12"><path d="M1 0V12" stroke="#7a9a3a" stroke-width="2"/><path d="M11 1V11L4 6Z" fill="#999"/></svg></button>
        <button class="keycap opacity-50" aria-label="Range end" style="width:27px"><svg width="12" height="12"><path d="M11 0V12" stroke="#7a9a3a" stroke-width="2"/><path d="M1 1V11L8 6Z" fill="#999"/></svg></button>
      </div>
    </div>
    <div class="flex-grow-1 d-flex flex-column" style="min-width:0">
      <div class="ruler" id="ruler"><div class="base"></div></div>
      <div class="d-flex align-items-center" style="margin-top:3px">
        <input class="field me-1" aria-label="Global start" value="1" style="width:48px;height:28px;background:#202020"><input class="field me-1" aria-label="Range start frame" value="1" style="width:46px;height:28px">
        <svg width="7" height="12"><path d="M0 0L7 6L0 12Z" fill="#aaa"/></svg><div class="track flex-grow-1"></div><svg width="7" height="12"><path d="M7 0L0 6L7 12Z" fill="#aaa"/></svg>
        <input class="field ms-1 me-1" aria-label="Range end frame" value="240" style="width:48px;height:28px"><input class="field" aria-label="Global end" value="240" style="width:48px;height:28px;background:#202020">
      </div>
    </div>
    <div class="d-flex align-items-center ps-1" style="width:282px">
      <svg width="64" height="50" viewBox="0 0 64 50"><rect x="40" y="13" width="24" height="24" fill="#3b3b3b" stroke="#222"/><circle cx="23" cy="25" r="23" fill="#303030" stroke="#222"/><circle cx="26" cy="21" r="5" fill="none" stroke="#666" stroke-width="3"/><path d="M23 25L15 33M18 30L21 33" stroke="#666" stroke-width="3"/><path d="M49 21H57L53 28Z" fill="#999"/></svg>
      <div class="d-flex flex-column gap-1" style="margin:0 5px 0 7px">
        <button class="keycap" aria-label="Scoped channels" style="width:27px;height:28px"><svg width="22" height="22" viewBox="0 0 22 22"><path d="M1 1H14V20H1Z" fill="#777"/><path d="M3 6H5M3 12H5" stroke="#c33" stroke-width="3"/><path d="M3 9H5M3 17H5" stroke="#8b3" stroke-width="3"/><path d="M7 10Q9 4 15 6M17 10Q16 17 9 16" fill="none" stroke="#ddd" stroke-width="3"/><path d="M14 2L19 7L13 9ZM10 13L6 17L12 19Z" fill="#ddd"/></svg></button>
        <button class="keycap" aria-label="Animation editor" style="width:27px;height:28px"><svg width="20" height="20" viewBox="0 0 20 20"><rect width="20" height="20" fill="#0c0c0c"/><path d="M1 11Q5 4 9 10T19 9" fill="none" stroke="#e09a35" stroke-width="2"/><path d="M2 13Q6 19 10 9T19 12" fill="none" stroke="#6b9bd8" stroke-width="2"/></svg></button>
      </div>
      <div class="d-flex flex-column flex-grow-1" style="gap:6px;min-width:0">
        <button class="keycap justify-content-between" style="height:28px;padding:0 5px 0 19px">0 keys, 0/0 channels<svg width="9" height="9"><path d="M0 8H9L4 0Z" fill="#888"/></svg></button>
        <div class="arrowed"><select class="picker w-100 ps-3" aria-label="Key mode" style="height:25px"><option>Key All Channels</option></select><svg width="9" height="17"><use href="#updown"/></svg></div>
      </div>
    </div>
  </footer>
</main>

<script src="https://cdn.jsdelivr.net/npm/bootstrap@5.3.0/dist/js/bootstrap.bundle.min.js"></script>
<script>
const points = `0.183436 0.0143186 0.110434 0.960001 0.201616 0.19429 1.52696 0.217144
0.183341 0.0126856 0.111094 0.996076 -0.0830683 0.0305228 1.52651 0.218353
0.183368 0.0140558 0.110618 -0.967315 0.253333 -0.0111695 1.52632 0.217131
0.183253 0.0123773 0.111068 -0.457696 -0.139698 -0.878065 1.52604 0.218409
0.183294 0.0105689 0.111054 0.484702 0.11881 -0.866572 1.52576 0.219688
0.18319 0.0108568 0.111291 0.911177 -0.0380354 0.410257 1.52607 0.219563
0.183341 0.0126856 0.111094 0.996076 -0.0830683 0.0305228 1.52651 0.218353
0.182862 0.0110699 0.111902 0.889222 -0.0905536 0.448424 1.52638 0.219438
0.183204 0.011984 0.111276 -0.985272 0.118402 -0.123367 1.52545 0.218862
0.183143 0.0101992 0.111135 -0.858178 0.0681774 -0.508805 1.52524 0.220143
0.183135 0.0129255 0.111484 0.932386 0.0035465 0.361447 1.52699 0.218298
0.183436 0.0143186 0.110434 0.960001 0.201616 0.19429 1.52696 0.217144
0.183085 0.0115141 0.111889 -0.979227 0.182048 -0.0892918 1.52486 0.219314
0.182918 0.00972879 0.111598 -0.940769 0.0767508 -0.330245 1.52471 0.220599
0.183453 0.0136632 0.111119 -0.934599 0.278255 0.221584 1.52566 0.21758
0.183368 0.0140558 0.110618 -0.967315 0.253333 -0.0111695 1.52632 0.217131
0.183502 0.0132351 0.111951 -0.946983 0.298715 0.118293 1.525 0.21803
0.182869 0.0109717 0.112744 -0.962679 0.254066 -0.0932756 1.52415 0.220021
0.182596 0.00915573 0.112315 -0.947275 0.110454 -0.300781 1.52418 0.221245
0.183463 0.0127506 0.112986 -0.936598 0.342953 0.0718773 1.52412 0.218796
0.182584 0.0103615 0.113787 -0.944914 0.314572 -0.0904487 1.52345 0.220727
0.182201 0.00850351 0.113231 -0.951509 0.132039 -0.277842 1.52364 0.221893
0.183352 0.0122073 0.114188 -0.920488 0.388771 0.0394969 1.52325 0.219562
0.182231 0.00973645 0.114975 -0.935123 0.347637 -0.0685085 1.52267 0.221686
0.181772 0.00782541 0.114309 -0.965381 0.123089 -0.229976 1.52293 0.222826
0.183152 0.0116708 0.115527 -0.904081 0.425912 0.0351578 1.52241 0.220547
0.181917 0.00909549 0.116278 -0.939762 0.340965 0.0242952 1.5219 0.222646
0.181443 0.00713754 0.115543 -0.986815 0.0916668 -0.133389 1.52221 0.22376
0.182931 0.0111172 0.116974 -0.89043 0.436308 0.129498 1.52158 0.221532
0.18182 0.00840423 0.117707 -0.933939 0.3229 0.153274 1.52101 0.223697
0.181291 0.0064578 0.117019 -0.997083 0.075182 -0.013125 1.52138 0.22478
0.182899 0.0104222 0.118458 -0.863428 0.425181 0.271502 1.52065 0.222614
0.18193 0.00772252 0.119226 -0.913416 0.32693 0.242461 1.52013 0.224748
0.181319 0.00583698 0.118629 -0.992133 0.0738166 0.101109 1.52054 0.2258
0.183074 0.00961987 0.119899 -0.827574 0.431345 0.359252 1.51972 0.223696
0.182112 0.00707572 0.120724 -0.897244 0.336435 0.285947 1.51899 0.225746
0.181544 0.00527398 0.120273 -0.980485 0.0619778 0.186566 1.5193 0.226848
0.183266 0.00883063 0.121261 -0.79166 0.467456 0.393394 1.51869 0.224643
0.184525 0.0110462 0.122363 -0.725373 0.480805 0.42072 1.51867 0.223744`.split('\n');
document.getElementById('rows').innerHTML = points.map((p, i) =>
  `<tr><th scope="row">${i}</th>${(p + ' 0.0').split(' ').map(v => `<td>${v}</td>`).join('')}<td></td></tr>`).join('');

// Floor grid in two-point perspective; a heavy line every five cells.
const near = [784, 2065], vu = [5750, 716], vv = [148, 688], a = .209, b = .6;
const sx = x => (1840 + x / 2.45).toFixed(1), sy = y => (y / 3).toFixed(1);
let thin = '', heavy = '';
const put = (k, d) => { if (k % 5) thin += d; else heavy += d; };
for (let k = -5; k < 90; k++) {
  const v = k / 5, w = 1 + v * b, cx = near[0] + v * b * vv[0], cy = near[1] + v * b * vv[1];
  const yAt = X => { const t = (X * w - cx) / (vu[0] - X); return (cy + t * vu[1]) / (w + t); };
  put(k, `M${sx(20)} ${sy(yAt(20))}L${sx(1510)} ${sy(yAt(1510))}`);
}
for (let k = -45; k < 120; k++) {
  const u = k / 5, w = 1 + u * a, cx = near[0] + u * a * vu[0], cy = near[1] + u * a * vu[1];
  const xAt = Y => { const t = (cy - Y * w) / (Y - vv[1]); return (cx + t * vv[0]) / (w + t); };
  put(k, `M${sx(xAt(825))} ${sy(825)}L${sx(xAt(2345))} ${sy(2345)}`);
}
document.getElementById('floor').innerHTML = `<path d="${thin}" stroke="#8b97a0" stroke-width="1" opacity=".75"/><path d="${heavy}" stroke="#838e9c" stroke-width="2" opacity=".75"/>`;

// Letters of the tiled texture where they show on the body.
document.getElementById('marks').innerHTML = [['C',2113,106,20],['C',2206,106,18],['B',2060,119,15],['C',2035,149,13],['D',2160,149,20],['D',2215,147,18],['E',2127,198,22],['E',2205,197,22],['E',2165,247,22],['7',2125,246,20],['4',2204,245,18],['D',2160,297,15],['D',2207,301,16],['O',2095,331,20],['2',2139,341,20],['O',2220,335,18],['N',2130,388,24],['Z',2125,446,24],['N',2229,439,20],['J',2120,494,20],['E',2003,222,15],['F',2228,381,16],['V',2324,220,12]]
  .map(m => `<text x="${m[1]}" y="${m[2]}" font-size="${m[3]}">${m[0]}</text>`).join('');

// 16 x 16 reference tile: letters run down, numbers run across.
let cells = '';
for (let r = 0; r < 16; r++) for (let c = 0; c < 16; c++) {
  const letter = (r + c) % 2 === 0;
  cells += `<text x="${Math.round(2494 + c * 12.4)}" y="${Math.round(337 + r * 12.4)}" fill="${letter ? '#262628' : '#505052'}">${letter ? String.fromCharCode(65 + r) : c + 1}</text>`;
}
document.getElementById('cells').innerHTML = cells;

// Timeline ticks every six frames.
let ticks = '';
for (let f = 6; f <= 240; f += 6) {
  const major = f % 24 === 0;
  ticks += `<div class="tick${major ? ' major' : ''}" style="left:${((f - 1) / 240 * 100).toFixed(2)}%">${major ? `<span>${f}</span>` : ''}</div>`;
}
document.getElementById('ruler').insertAdjacentHTML('beforeend', ticks + '<div class="head">1</div>');

const bulb = '<g color="#b5b5b0"><use href="#bulb" x="4" width="18" height="22"/></g>', fly = '<path d="M23 17L27 21L23 25Z" fill="#8a8a8a"/>', nub = '<path d="M23 17L27 21L23 25Z" fill="#1c2430"/>';
const tools = [
 ['Grid', 1, '<path d="M4 17L13 12L23 17L13 22Z" fill="#ddd"/><path d="M7 16L16 21M10 14L20 19M7 18L17 13M10 20L20 15" stroke="#333"/>' + nub],
 ['UV', 0, '<path d="M4 5L19 4L23 18L8 19Z" fill="#28331c" stroke="#a5c46b" stroke-width="2"/><ellipse cx="14" cy="11" rx="5" ry="4" fill="none" stroke="#ddd" stroke-width="2"/><path d="M11 5L15 18" stroke="#a5c46b"/>' + fly],
 ['Lock', 0, '<g color="#d8d8d4"><use href="#padlock" x="5" y="3" width="18" height="20"/></g><path d="M7 15H21M7 18H21" stroke="#a8a8a4"/>'],
 ['No lights', 0, '<path d="M14 4Q20 4 20 10Q20 13 16 18H12Q8 13 8 10Q8 4 14 4Z" fill="none" stroke="#aaa" stroke-width="1"/><path d="M11 7L17 13M17 7L11 13" stroke="#fff" stroke-width="2"/><path d="M12 20H17M12 23H16" stroke="#aaa"/>'],
 ['Headlight', 1, '<ellipse cx="12" cy="13" rx="9" ry="8" fill="#b8b8b4"/><ellipse cx="15" cy="14" rx="8" ry="7" fill="#eee" stroke="#666"/><ellipse cx="15" cy="14" rx="4" ry="5" fill="none" stroke="#aaa"/>' + nub],
 ['Light', 0, bulb + fly],
 ['Add light', 0, '<g color="#c8c983"><use href="#bulb" x="4" y="2" width="18" height="22"/></g><path d="M13 5V14M9 9H17" stroke="#333" stroke-width="2"/>' + fly],
 ['Env light', 0, '<ellipse cx="13" cy="19" rx="9" ry="3" fill="#111" stroke="#aaa" stroke-width="2"/><g color="#e4e5c0"><use href="#bulb" x="4" width="18" height="21"/></g><path d="M13 4V12M9 8H17" stroke="#333" stroke-width="2"/>' + fly],
 ['Shaded', 1, '<path d="M5 8L13 4L22 8V18L14 23L5 18Z" fill="#e8e8e8"/><path d="M5 8L13 12V18L5 14ZM13 4L22 8L18 11L10 6ZM14 18L22 14V18L14 23Z" fill="#161616"/><circle cx="13" cy="12" r="5" fill="#333"/>' + nub],
 ['Eye', 0, '<path d="M3 6Q14 6 24 16Q12 21 6 15Q9 13 5 10Z" fill="#ddd"/><path d="M4 9Q14 8 20 14" fill="none" stroke="#333"/><circle cx="14" cy="15" r="3" fill="#111"/><path d="M19 22H26L22 26Z" fill="#888"/>'],
 ['Eye render', 0, '<path d="M8 2Q16 4 25 13Q13 18 8 12Z" fill="#ddd"/><circle cx="17" cy="11" r="3" fill="#111"/><path d="M4 11H16V22H4Z" fill="#c8c8c8"/><path d="M7 13V20L13 16Z" fill="#fff" stroke="#777"/>' + fly],
 ['Point', 0, '<path d="M0 1H27" stroke="#4c4c4c"/><circle cx="13" cy="17" r="3" fill="#e8e8e4"/>'],
 ['Normals', 0, '<circle cx="11" cy="18" r="4" fill="none" stroke="#ccc" stroke-width="2"/><path d="M12 17L21 10" stroke="#eee" stroke-width="2"/>'],
 ['Hulls', 0, '<path d="M8 22L13 11L16 13Z" fill="#ccc"/><circle cx="17" cy="10" r="3" fill="#eee"/>'],
 ['Point numbers', 0, '<circle cx="9" cy="20" r="3" fill="#ddd"/><text x="10" y="16" font-size="12" font-weight="700" fill="#ddd">12</text>'],
 ['Prim normals', 0, '<path d="M5 18L17 13L22 20L8 23Z" fill="#ccc"/><path d="M14 17L17 8" stroke="#eee" stroke-width="2"/>'],
 ['Prim numbers', 0, '<path d="M5 20L14 12L22 22L8 23Z" fill="#999"/><text x="10" y="16" font-size="12" font-weight="700" fill="#eee">12</text>'],
 ['Curves', 0, '<path d="M5 22V5H22M5 22Q8 8 22 5" fill="none" stroke="#aaa" stroke-width="1"/><circle cx="5" cy="5" r="1" fill="#eee"/><circle cx="22" cy="5" r="2" fill="#eee"/><circle cx="5" cy="22" r="2" fill="#eee"/>'],
 ['Backface', 1, '<path d="M12 19L18 8L23 18Z" fill="#4a7fd0"/><path d="M4 19L15 8L17 14L13 19Z" fill="#e8e6dc"/>'],
 ['Transparency', 1, '<rect x="5" y="5" width="17" height="17" fill="#e8e6ec" stroke="#888"/><path d="M6 6H10V10H6ZM14 10H18V14H14ZM6 14H10V18H6Z" fill="#d89a9a"/><path d="M14 6H18V10H14ZM10 14H14V18H10Z" fill="#a9c0e6"/>' + nub],
 ['Displacement', 0, '<path d="M13 5L22 13L13 21L4 13Z" fill="#c8c8c4" stroke="#5d8cd0" stroke-width="2"/><path d="M13 8V18M8 13H18" stroke="#777"/>'],
 ['Islands', 1, '<path d="M5 5L10 7L17 6L22 5L20 13L22 21L14 19L5 21L7 13Z" fill="#dfe3d8" stroke="#95b947" stroke-width="2"/><path d="M11 10H16V16H11Z" fill="#999"/>'],
 ['Origin', 0, '<path d="M13 14H4M13 14L19 5M13 14L20 22" stroke="#ddd" stroke-width="2"/><circle cx="13" cy="14" r="3" fill="#fff"/>'],
 ['Follow', 0, '<circle cx="13" cy="13" r="9" fill="none" stroke="#999" stroke-dasharray="2 1"/><path d="M8 8H18V18H8Z" fill="#e2e2de"/><path d="M8 11H18M8 15H18" stroke="#aaa"/>'],
 ['Background', 1, '<rect x="5" y="6" width="17" height="20" fill="#8c8c88"/><path d="M6 23L11 16L15 22L18 18L22 25" fill="none" stroke="#111" stroke-width="2"/><ellipse cx="15" cy="11" rx="6" ry="3" fill="#eee"/>']];
document.getElementById('tools').innerHTML = tools.map(t => `<button class="${t[1] ? 'lit' : ''}" aria-label="${t[0]}"><svg width="27" height="27" viewBox="0 0 27 27">${t[2]}</svg></button>`).join('');
</script>
</body>
</html>
